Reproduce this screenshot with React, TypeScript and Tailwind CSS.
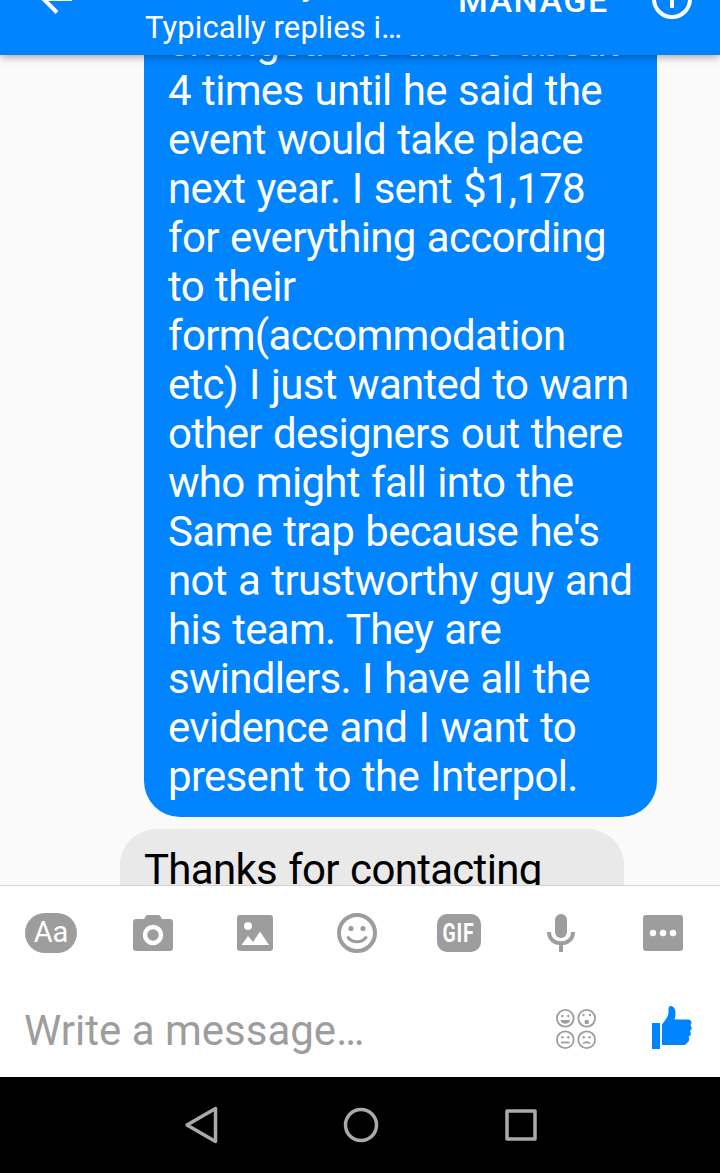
import type { ReactNode } from 'react'

const outgoing = [
  'changed the dates about',
  '4 times until he said the',
  'event would take place',
  'next year. I sent $1,178',
  'for everything according',
  'to their',
  'form(accommodation',
  'etc) I just wanted to warn',
  'other designers out there',
  'who might fall into the',
  "Same trap because he's",
  'not a trustworthy guy and',
  'his team. They are',
  'swindlers. I have all the',
  'evidence and I want to',
  'present to the Interpol.',
]

function TextIcon() {
  return (
    <div className="flex h-10 w-[52px] items-center justify-center rounded-[20px] bg-[#9d9d9d] text-[29px] leading-none text-white">
      <span className="-mt-0.5">Aa</span>
    </div>
  )
}

function CameraIcon() {
  return (
    <svg width="40" height="36" viewBox="0 0 40 36">
      <path
        d="M3 4h8l1.500-2.600Q13.300 0 15 0h10q1.700 0 2.500 1.400L29 4h8q3 0 3 3v26q0 3-3 3H3q-3 0-3-3V7q0-3 3-3z"
        fill="#9d9d9d"
      />
      <circle cx="20" cy="20" r="8" fill="none" stroke="#fff" strokeWidth="4.500" />
    </svg>
  )
}

function PhotoIcon() {
  return (
    <svg width="36" height="36" viewBox="0 0 36 36">
      <rect width="36" height="36" rx="3" fill="#9d9d9d" />
      <circle cx="11" cy="11" r="4" fill="#fff" />
      <path d="M4.500 30l6.500-9 5 6 7-10.500 9 13.500z" fill="#fff" />
    </svg>
  )
}

function SmileIcon() {
  return (
    <svg width="40" height="40" viewBox="0 0 40 40" fill="none" stroke="#9d9d9d">
      <circle cx="20" cy="20" r="18" strokeWidth="4" />
      <circle cx="14" cy="15.500" r="2.600" fill="#9d9d9d" stroke="none" />
      <circle cx="26" cy="15.500" r="2.600" fill="#9d9d9d" stroke="none" />
      <path d="M10.500 23.500c4 7 15 7 19 0" strokeWidth="3.200" />
    </svg>
  )
}

function GifIcon() {
  return (
    <div className="flex h-[38px] w-11 items-center justify-center rounded-[10px] bg-[#9d9d9d] text-[25px] leading-none font-bold tracking-[1px] text-white">
      <span className="scale-x-[0.78]">GIF</span>
    </div>
  )
}

function MicIcon() {
  return (
    <svg width="28" height="38" viewBox="0 0 28 38">
      <rect x="8" width="12" height="24" rx="6" fill="#9d9d9d" />
      <path d="M2 18c0 15 24 15 24 0M14 29v9" fill="none" stroke="#9d9d9d" strokeWidth="4" />
    </svg>
  )
}

function MoreIcon() {
  return (
    <svg width="40" height="36" viewBox="0 0 40 36">
      <rect width="40" height="36" rx="3" fill="#9d9d9d" />
      <g fill="#fff">
        <circle cx="10" cy="18" r="3.200" />
        <circle cx="20" cy="18" r="3.200" />
        <circle cx="30" cy="18" r="3.200" />
      </g>
    </svg>
  )
}

function StickersIcon() {
  return (
    <svg width="40" height="40" viewBox="0 0 40 40" fill="none" stroke="#9d9d9d" strokeWidth="1.800">
      <circle cx="9.300" cy="9.300" r="8.400" />
      <circle cx="30.700" cy="9.300" r="8.400" />
      <circle cx="9.300" cy="30.700" r="8.400" />
      <circle cx="30.700" cy="30.700" r="8.400" />
      <g fill="#9d9d9d" stroke="none">
        <circle cx="6.300" cy="7" r="1.200" />
        <circle cx="12.300" cy="7" r="1.200" />
        <circle cx="27.500" cy="6" r="1.200" />
        <circle cx="34" cy="6" r="1.200" />
        <circle cx="6.300" cy="28.300" r="1.200" />
        <circle cx="12.300" cy="28.300" r="1.200" />
        <circle cx="27.700" cy="28.300" r="1.200" />
        <circle cx="33.700" cy="28.300" r="1.200" />
        <path d="M4.500 11h9.600c-.6 5-9 5-9.600 0z" />
        <circle cx="30.700" cy="13" r="2.300" />
        <path d="M26.500 35c1-3.800 7.400-3.800 8.400 0-2.500-1-5.900-1-8.400 0z" />
      </g>
      <path d="M5 33.500h8.600" />
    </svg>
  )
}

function LikeIcon() {
  return (
    <svg width="40" height="44" viewBox="0 0 40 44" fill="#0084ff">
      <path d="M0 17h8v26H0z" />
      <path d="M10 18.500c3-4 6.500-8 6.500-12V2.500Q16.500 0 19 0c3.500.5 4.500 4 4.500 7 0 2.500-.5 4.500-1 6.500H36c3.500 0 4.500 4 2.200 5.700 2.300 1.500 1.800 5-.4 5.800 2 1.700 1.200 5-1.300 5.800 1.500 2 .5 5-1.500 6-1 2.200-2.500 2.200-4 2.200H10z" />
    </svg>
  )
}

const tools: { name: string; icon: ReactNode }[] = [
  { name: 'text', icon: <TextIcon /> },
  { name: 'camera', icon: <CameraIcon /> },
  { name: 'photo', icon: <PhotoIcon /> },
  { name: 'emoji', icon: <SmileIcon /> },
  { name: 'gif', icon: <GifIcon /> },
  { name: 'voice', icon: <MicIcon /> },
  { name: 'more', icon: <MoreIcon /> },
]

function Header() {
  return (
    <header className="relative z-10 flex h-[55px] items-start bg-[#0084ff] text-white shadow-[0_2px_8px_rgba(0,0,0,0.35)]">
      <svg className="ml-10 shrink-0" width="32" height="15" viewBox="0 0 32 15" fill="none" stroke="#fff" strokeWidth="4">
        <path d="M32 -1H3M2.500 -2L17 12.500" />
      </svg>
      <div className="ml-[73px] w-[313px] shrink-0">
        <div className="-mt-[38px] pl-[156px] text-[34px] leading-[42px] font-medium">y</div>
        <div className="mt-[5px] text-[31px] leading-[37px] tracking-[0.1px]">Typically replies i…</div>
      </div>
      <div className="-mt-[17px] w-[192px] shrink-0 text-[34px] leading-[35px] font-medium tracking-[1.5px]">MANAGE</div>
      <svg className="shrink-0" width="44" height="20" viewBox="0 0 44 20" fill="none" stroke="#fff" strokeWidth="4">
        <circle cx="22" cy="-1" r="18" />
        <path d="M22 -4V8" />
      </svg>
    </header>
  )
}

export default function App() {
  return (
    <div className="flex h-[1173px] w-[720px] flex-col overflow-hidden bg-[#fafafa] font-[Roboto,sans-serif]">
      <Header />

      {/* Conversation */}
      <main className="h-[830px] overflow-hidden text-[42px] leading-[49px] tracking-[-0.7px] whitespace-nowrap [word-spacing:1.5px]">
        <div className="-mt-[54px] ml-36 w-[513px] rounded-[36px] bg-[#0084ff] py-4 pl-6 text-white">
          {outgoing.map((line) => (
            <div key={line}>{line}</div>
          ))}
        </div>
        <div className="mt-3 ml-[120px] h-24 w-[504px] rounded-[36px] bg-[#e9e9e9] pt-4 pl-6 text-black">
          Thanks for contacting
        </div>
      </main>

      {/* Composer */}
      <footer className="h-48 border-t border-[#d2d2d2] bg-white">
        <div className="grid h-[94px] w-[714px] grid-cols-7">
          {tools.map((tool) => (
            <div key={tool.name} className="flex items-center justify-center">
              {tool.icon}
            </div>
          ))}
        </div>
        <div className="flex h-[97px] items-center pl-6">
          <div className="mt-[3px] w-[532px] text-[42px] leading-[49px] text-[#9d9d9d]">Write a message…</div>
          <StickersIcon />
          <div className="-mt-px ml-14">
            <LikeIcon />
          </div>
        </div>
      </footer>

      {/* System navigation */}
      <nav className="flex h-24 items-center bg-black pl-[121px]">
        <div className="grid w-[480px] grid-cols-3 justify-items-center">
          <svg width="36" height="38" viewBox="0 0 36 38" fill="none" stroke="#aaa" strokeWidth="3.500" strokeLinejoin="round">
            <path d="M32.500 2.500v33L4 19z" />
          </svg>
          <svg width="36" height="38" viewBox="0 0 36 38" fill="none" stroke="#aaa" strokeWidth="3.500">
            <circle cx="18" cy="19" r="15.500" />
          </svg>
          <svg width="36" height="38" viewBox="0 0 36 38" fill="none" stroke="#aaa" strokeWidth="3.500" strokeLinejoin="round">
            <rect x="4" y="5" width="28" height="28" />
          </svg>
        </div>
      </nav>
    </div>
  )
}
